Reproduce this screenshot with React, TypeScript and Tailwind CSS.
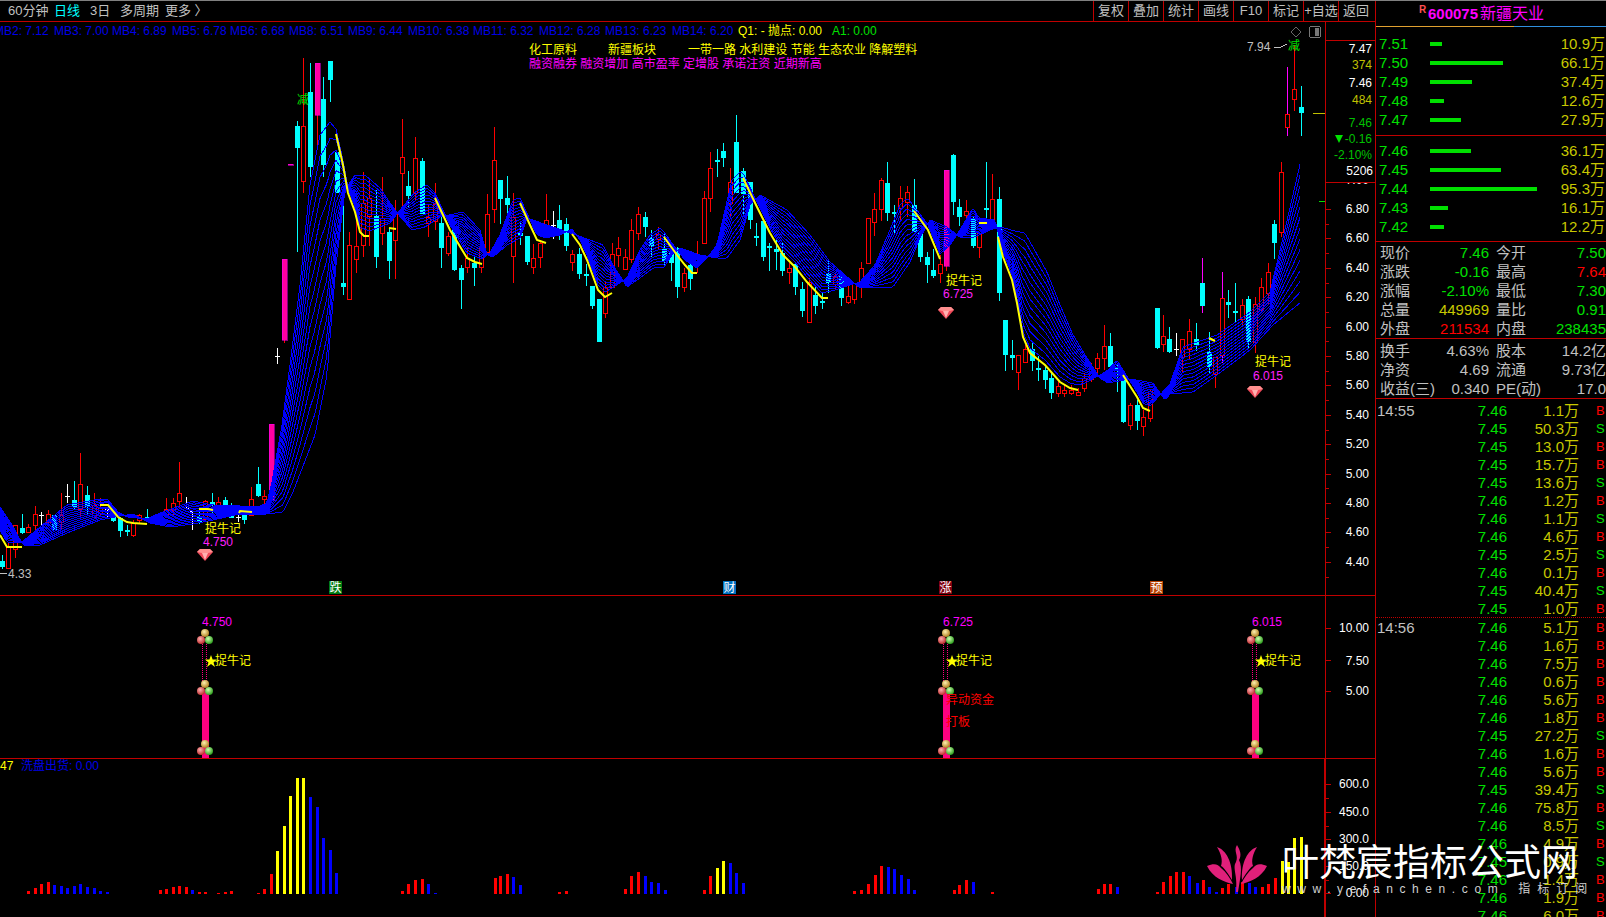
type Pt = [number, number];
type Candle = [number, number, number, number, number, string];

const RED_LINE = "#c00000";

// x, high, top, bottom, low, kind (r red, c cyan, w white, p magenta bar, M red+magenta wick, N cyan+magenta wick)
const candles: Candle[] = [
  [2, 555, 561, 567, 569, "c"], [8, 543, 546, 568, 568, "r"], [15, 525, 525, 549, 558, "r"], [22, 514, 528, 533, 534, "c"],
  [28, 524, 527, 532, 532, "r"], [35, 506, 514, 525, 533, "r"], [41, 512, 515, 515, 525, "w"], [48, 510, 514, 522, 522, "r"],
  [54, 515, 515, 530, 530, "c"], [61, 493, 515, 522, 530, "r"], [67, 484, 496, 497, 503, "w"], [74, 481, 500, 507, 510, "c"],
  [80, 453, 484, 509, 517, "r"], [87, 486, 495, 507, 515, "c"], [94, 493, 505, 517, 517, "r"], [100, 498, 507, 513, 517, "r"],
  [107, 508, 509, 510, 517, "w"], [113, 513, 514, 521, 522, "c"], [120, 517, 518, 531, 537, "c"], [127, 525, 530, 532, 536, "c"],
  [133, 520, 523, 535, 537, "r"], [139, 514, 515, 520, 524, "r"], [147, 509, 517, 519, 520, "c"], [153, 517, 518, 520, 521, "c"],
  [160, 512, 514, 522, 524, "r"], [166, 498, 509, 515, 518, "r"], [173, 498, 503, 510, 515, "r"], [179, 462, 493, 501, 508, "r"],
  [186, 497, 508, 509, 510, "w"], [192, 510, 511, 512, 530, "w"], [199, 510, 517, 522, 524, "c"], [205, 500, 501, 519, 522, "r"],
  [212, 493, 502, 505, 513, "c"], [218, 497, 502, 506, 513, "r"], [225, 497, 500, 507, 508, "c"], [231, 503, 507, 518, 518, "c"],
  [238, 510, 517, 518, 522, "w"], [244, 513, 514, 520, 524, "c"], [251, 487, 499, 515, 516, "r"], [258, 467, 484, 496, 497, "c"],
  [264, 490, 496, 499, 506, "r"], [271, 424, 424, 500, 500, "p"], [277, 348, 356, 357, 364, "w"], [284, 259, 259, 340, 343, "p"],
  [290, 164, 164, 165, 165, "p"], [297, 121, 126, 148, 252, "c"], [303, 58, 126, 181, 193, "r"], [310, 63, 92, 167, 177, "c"],
  [317, 63, 63, 115, 145, "p"], [323, 77, 99, 165, 177, "c"], [330, 61, 61, 80, 102, "c"], [337, 152, 152, 193, 193, "c"],
  [343, 193, 283, 287, 295, "c"], [349, 232, 245, 299, 299, "r"], [356, 213, 246, 259, 273, "r"], [363, 172, 203, 245, 257, "r"],
  [369, 180, 198, 216, 246, "r"], [376, 190, 216, 257, 268, "c"], [382, 177, 218, 233, 245, "r"], [389, 228, 232, 261, 279, "c"],
  [395, 200, 214, 240, 279, "r"], [402, 119, 157, 173, 207, "r"], [408, 171, 186, 196, 207, "c"], [415, 137, 158, 193, 200, "r"],
  [422, 158, 161, 214, 214, "c"], [428, 205, 217, 223, 237, "r"], [435, 183, 204, 221, 230, "r"], [441, 213, 223, 248, 268, "c"],
  [448, 232, 236, 253, 256, "r"], [454, 230, 230, 270, 271, "c"], [461, 265, 268, 280, 309, "c"], [467, 248, 258, 267, 273, "r"],
  [474, 256, 263, 268, 286, "c"], [481, 247, 247, 267, 273, "r"], [487, 194, 214, 252, 252, "r"], [494, 127, 160, 209, 223, "r"],
  [500, 180, 180, 199, 224, "c"], [507, 176, 198, 205, 220, "c"], [513, 193, 217, 256, 283, "r"], [520, 222, 233, 236, 245, "c"],
  [527, 236, 236, 262, 265, "c"], [533, 244, 258, 267, 274, "r"], [540, 240, 243, 257, 268, "r"], [546, 194, 220, 227, 235, "r"],
  [553, 211, 225, 226, 239, "w"], [559, 205, 220, 230, 240, "c"], [566, 218, 224, 246, 251, "c"], [572, 250, 254, 262, 271, "r"],
  [579, 248, 254, 274, 279, "c"], [586, 264, 274, 276, 286, "c"], [592, 286, 286, 306, 309, "c"], [599, 299, 299, 342, 342, "c"],
  [605, 282, 287, 313, 318, "r"], [612, 243, 254, 287, 287, "r"], [618, 237, 248, 255, 267, "r"], [625, 249, 257, 269, 269, "r"],
  [631, 219, 230, 259, 263, "r"], [638, 207, 214, 233, 240, "r"], [645, 212, 217, 227, 237, "c"], [651, 230, 238, 246, 257, "c"],
  [658, 227, 234, 239, 250, "r"], [664, 233, 249, 261, 266, "c"], [671, 250, 253, 263, 281, "c"], [677, 247, 248, 287, 298, "c"],
  [684, 268, 273, 287, 292, "r"], [690, 264, 265, 279, 290, "c"], [697, 241, 255, 265, 273, "r"], [704, 191, 198, 243, 243, "r"],
  [710, 152, 168, 198, 212, "r"], [717, 149, 160, 162, 177, "c"], [723, 143, 151, 158, 167, "c"], [730, 168, 182, 203, 218, "r"],
  [736, 115, 142, 193, 193, "c"], [743, 168, 171, 194, 214, "c"], [750, 182, 182, 220, 229, "c"], [756, 223, 236, 237, 246, "c"],
  [763, 221, 221, 257, 261, "c"], [769, 243, 246, 248, 271, "c"], [776, 239, 249, 252, 270, "c"], [782, 243, 253, 271, 276, "c"],
  [789, 263, 268, 272, 284, "r"], [795, 264, 264, 287, 295, "c"], [802, 282, 289, 311, 317, "c"], [809, 278, 282, 322, 322, "r"],
  [815, 285, 295, 306, 314, "c"], [822, 293, 301, 302, 309, "c"], [828, 259, 274, 283, 293, "c"], [835, 272, 276, 284, 290, "r"],
  [841, 274, 274, 298, 306, "c"], [848, 283, 296, 302, 304, "r"], [854, 283, 283, 299, 304, "r"], [861, 262, 268, 281, 298, "r"],
  [868, 218, 218, 263, 264, "r"], [874, 193, 209, 222, 236, "r"], [881, 178, 180, 209, 221, "r"], [887, 162, 183, 213, 221, "c"],
  [894, 205, 212, 213, 234, "c"], [900, 186, 198, 208, 221, "r"], [907, 186, 192, 202, 217, "r"], [914, 179, 205, 232, 232, "c"],
  [920, 231, 232, 257, 262, "c"], [927, 252, 257, 265, 283, "c"], [933, 249, 270, 276, 278, "c"], [940, 255, 264, 273, 283, "r"],
  [946, 170, 170, 266, 271, "p"], [953, 154, 155, 202, 215, "c"], [959, 199, 207, 217, 226, "c"], [966, 200, 211, 215, 227, "r"],
  [973, 217, 218, 246, 248, "c"], [979, 233, 233, 247, 258, "r"], [986, 162, 208, 209, 223, "c"], [992, 174, 199, 222, 223, "r"],
  [999, 187, 199, 293, 301, "c"], [1005, 320, 320, 355, 371, "c"], [1012, 340, 355, 358, 370, "c"], [1018, 355, 355, 372, 390, "r"],
  [1025, 345, 349, 362, 363, "r"], [1032, 343, 349, 361, 371, "c"], [1038, 356, 368, 370, 381, "c"], [1045, 367, 370, 380, 389, "c"],
  [1051, 373, 378, 393, 399, "c"], [1058, 380, 386, 393, 397, "r"], [1064, 385, 390, 393, 397, "r"], [1071, 385, 390, 393, 395, "r"],
  [1078, 388, 392, 395, 396, "r"], [1084, 373, 378, 388, 392, "r"], [1091, 363, 367, 379, 382, "r"], [1097, 353, 358, 368, 373, "r"],
  [1104, 325, 346, 358, 370, "r"], [1110, 333, 346, 367, 370, "c"], [1117, 363, 367, 368, 392, "c"], [1123, 373, 379, 422, 423, "c"],
  [1130, 403, 405, 425, 430, "r"], [1137, 400, 405, 421, 430, "c"], [1143, 410, 417, 426, 436, "r"], [1150, 390, 391, 418, 422, "r"],
  [1157, 308, 308, 348, 349, "c"], [1163, 315, 336, 344, 352, "r"], [1169, 327, 339, 352, 353, "c"], [1176, 333, 349, 350, 356, "w"],
  [1182, 339, 339, 357, 373, "r"], [1189, 319, 331, 349, 360, "r"], [1196, 323, 339, 345, 351, "c"], [1202, 258, 283, 306, 313, "N"],
  [1209, 332, 352, 367, 373, "c"], [1215, 357, 357, 374, 388, "r"], [1222, 272, 298, 355, 363, "M"], [1228, 290, 302, 305, 318, "c"],
  [1235, 283, 311, 312, 323, "c"], [1242, 299, 305, 319, 327, "r"], [1248, 296, 299, 342, 348, "c"], [1255, 297, 304, 342, 353, "r"],
  [1261, 278, 287, 309, 313, "r"], [1268, 263, 272, 293, 305, "r"], [1274, 220, 224, 243, 259, "c"], [1281, 162, 172, 232, 237, "r"],
  [1287, 67, 114, 127, 136, "M"], [1294, 45, 89, 99, 111, "r"], [1301, 86, 107, 113, 136, "c"],
];

const fast: Pt[] = [
  [0, 535], [7, 547], [22, 547], [40, 532], [67, 510], [100, 504], [108, 505], [118, 517], [127, 522], [147, 524], [160, 518], [193, 506],
  [213, 510], [240, 511], [260, 511], [267, 508], [272, 487], [282, 430], [290, 370], [300, 290], [310, 190], [320, 140], [330, 127],
  [336, 134], [343, 165], [348, 193], [355, 212], [360, 232], [369, 236], [380, 232], [390, 228], [400, 215], [415, 197], [427, 190],
  [435, 198], [450, 230], [467, 258], [482, 264], [490, 258], [500, 240], [513, 205], [520, 203], [530, 225], [537, 240], [546, 243],
  [560, 240], [572, 234], [580, 245], [587, 260], [598, 290], [605, 297], [612, 293], [627, 283], [640, 255], [650, 240], [660, 233],
  [664, 237], [677, 255], [685, 265], [697, 273], [707, 263], [717, 250], [725, 215], [732, 185], [740, 177], [743, 178], [757, 207],
  [770, 233], [783, 255], [795, 267], [807, 282], [822, 298], [835, 295], [850, 290], [860, 287], [875, 270], [890, 235], [900, 210],
  [907, 203], [914, 211], [928, 230], [940, 259], [950, 250], [960, 235], [973, 213], [979, 223], [995, 225], [998, 237], [1003, 257],
  [1012, 280], [1017, 303], [1023, 337], [1030, 353], [1045, 365], [1060, 382], [1070, 388], [1078, 390], [1085, 388], [1100, 380],
  [1108, 375], [1117, 365], [1123, 375], [1137, 397], [1143, 408], [1150, 411], [1160, 400], [1170, 389], [1183, 352], [1217, 340],
  [1250, 317], [1270, 297], [1283, 243], [1301, 165],
];

const slow: Pt[] = [
  [0, 502], [12, 520], [23, 540], [40, 540], [67, 528], [100, 515], [120, 511], [133, 509], [150, 518], [170, 522], [193, 519], [213, 515],
  [240, 509], [267, 509], [283, 507], [293, 487], [315, 430], [327, 370], [336, 260], [345, 185], [355, 170], [365, 170], [380, 183],
  [397, 208], [412, 225], [425, 222], [440, 212], [463, 207], [480, 225], [487, 250], [493, 252], [507, 240], [520, 233], [527, 213],
  [547, 220], [573, 229], [590, 235], [603, 240], [613, 260], [627, 282], [637, 275], [653, 263], [664, 262], [672, 250], [680, 243],
  [700, 250], [717, 253], [727, 253], [740, 235], [750, 200], [760, 190], [787, 205], [810, 230], [830, 257], [860, 283], [893, 282],
  [910, 257], [920, 233], [930, 215], [947, 222], [960, 232], [975, 232], [990, 225], [1000, 222], [1015, 226], [1025, 228], [1030, 237],
  [1047, 267], [1060, 300], [1073, 330], [1087, 353], [1100, 373], [1108, 378], [1130, 374], [1153, 378], [1165, 395], [1170, 389],
  [1193, 387], [1217, 370], [1250, 345], [1273, 320], [1301, 297],
];

const yellowRuns: Pt[][] = [
  [[0, 535], [7, 547], [22, 547]],
  [[100, 505], [108, 505], [118, 517], [127, 522], [133, 523], [147, 524]],
  [[199, 509], [208, 509], [213, 510]],
  [[239, 513], [240, 511], [252, 512]],
  [[336, 134], [343, 165], [348, 193], [355, 212], [360, 232], [364, 236], [369, 236]],
  [[389, 228], [396, 229]],
  [[435, 198], [450, 230], [467, 258], [475, 262], [482, 264]],
  [[520, 203], [530, 225], [537, 240], [546, 243]],
  [[572, 234], [580, 245], [587, 260], [598, 290], [605, 297], [612, 293]],
  [[664, 237], [677, 255], [685, 265], [692, 273], [697, 273]],
  [[743, 178], [757, 207], [770, 233], [783, 255], [795, 267], [807, 282], [822, 298], [828, 298]],
  [[914, 211], [928, 230], [940, 259]],
  [[979, 223], [987, 223]],
  [[998, 237], [1003, 257], [1012, 280], [1017, 303], [1023, 337], [1030, 353], [1045, 365], [1060, 382], [1070, 388], [1078, 390]],
  [[1123, 375], [1137, 397], [1143, 408], [1150, 411]],
  [[1209, 338], [1215, 341]],
];

// volume pane: x, height, colour
const R = "#ff0000";
const B = "#0000ff";
const Y = "#ffff00";
const volumes: [number, number, string][] = [
  [28, 3, R], [35, 6, R], [41, 10, R], [48, 12, R], [54, 9, B], [61, 8, B], [67, 6, B], [74, 8, B], [80, 10, B], [87, 7, B], [94, 6, B], [100, 3, B], [107, 2, B],
  [160, 4, R], [166, 5, R], [173, 7, R], [179, 8, R], [186, 7, R], [192, 4, B], [199, 2, R], [205, 2, R], [218, 1, R], [225, 2, R], [231, 3, R],
  [258, 1, R], [264, 5, R], [271, 20, R], [277, 43, Y], [284, 68, Y], [290, 98, Y], [297, 116, Y], [303, 116, Y],
  [310, 97, B], [317, 87, B], [323, 56, B], [330, 44, B], [336, 21, B],
  [402, 3, R], [408, 10, R], [415, 14, R], [422, 15, R], [428, 10, B], [435, 1, B],
  [495, 16, R], [500, 18, R], [507, 20, R], [513, 17, B], [520, 9, B], [559, 2, R], [566, 3, R],
  [625, 5, R], [631, 18, R], [638, 22, R], [645, 18, B], [651, 12, B], [658, 11, B], [665, 4, B],
  [704, 4, R], [710, 18, R], [717, 26, Y], [723, 33, Y], [730, 31, B], [736, 21, B], [743, 11, B],
  [854, 3, R], [861, 4, R], [868, 10, R], [875, 19, R], [881, 28, R], [888, 27, B], [894, 25, B], [901, 19, B], [908, 15, B], [914, 4, B],
  [954, 4, R], [959, 9, R], [966, 14, R], [973, 12, B], [992, 2, R],
  [1098, 5, R], [1104, 10, R], [1110, 10, R], [1117, 7, B],
  [1157, 2, R], [1163, 12, R], [1170, 18, R], [1176, 22, R], [1183, 22, R], [1189, 18, B], [1197, 11, B], [1203, 14, R], [1209, 7, B], [1216, 2, B],
  [1222, 6, R], [1228, 10, R], [1236, 7, B], [1242, 12, R], [1249, 11, B], [1255, 7, B], [1262, 7, R], [1268, 10, R], [1275, 16, R],
  [1282, 33, Y], [1288, 32, Y], [1294, 56, Y], [1301, 57, Y],
];

const lerpAt = (pts: Pt[], x: number) => {
  for (let i = 1; i < pts.length; i++) {
    if (x <= pts[i][0]) {
      const [x0, y0] = pts[i - 1];
      const [x1, y1] = pts[i];
      return y0 + ((y1 - y0) * (x - x0)) / (x1 - x0 || 1);
    }
  }
  return pts[pts.length - 1][1];
};

const ribbonPaths = Array.from({ length: 14 }, (_, k) => {
  const t = k / 13;
  let d = "";
  for (let x = 0; x <= 1301; x += 2) {
    const f = lerpAt(fast, x);
    const s = lerpAt(slow, x);
    const y = f + (s - f) * t + (t - 0.5) * 10;
    d += `${d ? "L" : "M"}${x} ${y.toFixed(1)}`;
  }
  return d;
});

const toPoints = (pts: Pt[]) => pts.map((p) => p.join(",")).join(" ");

const T = ({ x, y, c = "#fff", s = 12, a = "start", children }: { x: number; y: number; c?: string; s?: number; a?: "start" | "end" | "middle"; children: React.ReactNode }) => (
  <text x={x} y={y} fill={c} fontSize={s} textAnchor={a} dominantBaseline="central">
    {children}
  </text>
);

const CandleMark = ({ d }: { d: Candle }) => {
  const [x, hi, top, bot, lo, k] = d;
  const isCyan = k === "c" || k === "N";
  const wick = k === "M" || k === "N" ? "#ff00ff" : k === "w" ? "#fff" : k === "p" ? "#ff0000" : isCyan ? "#00ffff" : "#ff0000";
  return (
    <g>
      <line x1={x + 0.5} x2={x + 0.5} y1={hi} y2={lo} stroke={wick} />
      {k === "p" && <rect x={x - 2} y={top} width={5} height={bot - top} fill="#ff00a0" stroke="#ff00ff" strokeWidth={0.5} />}
      {isCyan && <rect x={x - 2} y={top} width={5} height={Math.max(bot - top, 2)} fill="#00ffff" />}
      {(k === "r" || k === "M") && <rect x={x - 1.5} y={top + 0.5} width={4} height={bot - top} fill="#000" stroke="#ff0000" />}
      {k === "w" && <line x1={x - 2} x2={x + 3} y1={top + 0.5} y2={top + 0.5} stroke="#fff" />}
    </g>
  );
};

const Gem = ({ x, y }: { x: number; y: number }) => (
  <g shapeRendering="auto">
    <polygon points={`${x - 8},${y - 3} ${x - 5},${y - 6} ${x + 5},${y - 6} ${x + 8},${y - 3} ${x},${y + 6}`} fill="#f04858" />
    <polygon points={`${x - 8},${y - 3} ${x - 5},${y - 6} ${x + 5},${y - 6} ${x + 8},${y - 3} ${x + 3},${y - 2} ${x - 3},${y - 2}`} fill="#ff9090" />
    <polygon points={`${x - 3},${y - 2} ${x + 3},${y - 2} ${x},${y + 5}`} fill="#ffb0b0" />
  </g>
);

const Balls = ({ x, y }: { x: number; y: number }) => (
  <g shapeRendering="auto">
    <circle cx={x} cy={y - 4} r={4} fill="url(#ballGold)" />
    <circle cx={x - 4} cy={y + 3} r={4} fill="url(#ballRed)" />
    <circle cx={x + 4} cy={y + 3} r={4} fill="url(#ballGreen)" />
  </g>
);

const Signal = ({ x, label, extra }: { x: number; label: string; extra?: boolean }) => (
  <g>
    <T x={x - 3} y={622} c="#ff00ff">{label}</T>
    <line x1={x - 2.5} x2={x - 2.5} y1={642} y2={684} stroke="#ff0080" strokeDasharray="1 1" />
    <line x1={x + 1.5} x2={x + 1.5} y1={642} y2={684} stroke="#ff0080" strokeDasharray="1 1" />
    <rect x={x - 3} y={692} width={7} height={66} fill="#ff0080" />
    <Balls x={x} y={637} />
    <Balls x={x} y={688} />
    <Balls x={x} y={748} />
    <polygon shapeRendering="auto" fill="#ffff00" points={`${x + 6},${655} ${x + 7.6},${659.5} ${x + 12},${659.5} ${x + 8.5},${662.5} ${x + 10},${667} ${x + 6},${664} ${x + 2},${667} ${x + 3.5},${662.5} ${x},${659.5} ${x + 4.4},${659.5}`} />
    <T x={x + 10} y={661} c="#ffff00">捉牛记</T>
    {extra && (
      <>
        <T x={x} y={700} c="#ff0000">异动资金</T>
        <T x={x} y={722} c="#ff0000">打板</T>
      </>
    )}
  </g>
);

const MainPane = () => {
  const priceY = (p: number) => 209 + (6.8 - p) * 147;
  const ticks = Array.from({ length: 26 }, (_, i) => 6.8 - i * 0.1);
  const labels = ["6.80", "6.60", "6.40", "6.20", "6.00", "5.80", "5.60", "5.40", "5.20", "5.00", "4.80", "4.60", "4.40"];
  const infos: [number, string][] = [
    [-6, "MB2: 7.12"], [54, "MB3: 7.00"], [112, "MB4: 6.89"], [172, "MB5: 6.78"], [230, "MB6: 6.68"], [289, "MB8: 6.51"], [348, "MB9: 6.44"],
    [408, "MB10: 6.38"], [473, "MB11: 6.32"], [539, "MB12: 6.28"], [605, "MB13: 6.23"], [672, "MB14: 6.20"],
  ];
  const badges: [number, string, string][] = [[329, "跌", "#007a10"], [723, "财", "#0070c0"], [939, "涨", "#800010"], [1150, "预", "#b84000"]];
  return (
    <svg width={1375} height={573} viewBox="0 22 1375 573" shapeRendering="crispEdges" className="block border-0">
      {candles.map((d) => <CandleMark key={d[0]} d={d} />)}
      {ribbonPaths.map((d, i) => <path key={i} d={d} fill="none" stroke="#0000ff" />)}
      {yellowRuns.map((r, i) => <polyline key={i} points={toPoints(r)} fill="none" stroke="#ffff00" strokeWidth={2} shapeRendering="auto" />)}

      {infos.map(([x, t]) => <T key={t} x={x} y={31} c="#0000e8">{t}</T>)}
      <T x={738} y={31} c="#ffff00">Q1: -</T>
      <T x={768} y={31} c="#ffff00">抛点: 0.00</T>
      <T x={832} y={31} c="#00e000">A1: 0.00</T>

      <T x={529} y={50} c="#ffff00">化工原料</T>
      <T x={608} y={50} c="#ffff00">新疆板块</T>
      <T x={688} y={50} c="#ffff00">一带一路 水利建设 节能 生态农业 降解塑料</T>
      <T x={529} y={64} c="#ff00ff">融资融券 融资增加 高市盈率 定增股 承诺注资 近期新高</T>

      <polygon points="1296,27 1301,32 1296,37 1291,32" fill="none" stroke="#666" shapeRendering="auto" />
      <rect x={1309.5} y={26.5} width={11} height={11} rx={2} fill="#000" stroke="#777" />
      <rect x={1315} y={28} width={4} height={8} fill="#777" />

      <T x={297} y={100} c="#00e000">减</T>
      <T x={1247} y={47} c="#c0c0c0">7.94</T>
      <polyline points="1274,47 1281,47 1287,44" fill="none" stroke="#c0c0c0" />
      <T x={1288} y={46} c="#00e000">减</T>
      <T x={8} y={574} c="#c0c0c0">4.33</T>
      <line x1={0} x2={7} y1={573} y2={573} stroke="#c0c0c0" />

      <T x={205} y={529} c="#ffff00">捉牛记</T>
      <T x={203} y={542} c="#ff20ff">4.750</T>
      <Gem x={205} y={555} />
      <T x={946} y={281} c="#ffff00">捉牛记</T>
      <T x={943} y={294} c="#ff20ff">6.725</T>
      <Gem x={946} y={313} />
      <T x={1255} y={362} c="#ffff00">捉牛记</T>
      <T x={1253} y={376} c="#ff20ff">6.015</T>
      <Gem x={1255} y={392} />

      {badges.map(([x, t, c]) => (
        <g key={t}>
          <rect x={x} y={581} width={13} height={13} fill={c} />
          <T x={x + 0.5} y={587.5} s={12}>{t}</T>
        </g>
      ))}

      <line x1={1313} x2={1325} y1={113.5} y2={113.5} stroke="#c0c000" />
      <line x1={1319} x2={1325} y1={201.5} y2={201.5} stroke="#00e000" />

      <line x1={1325.5} x2={1325.5} y1={22} y2={595} stroke={RED_LINE} />
      {ticks.map((p, i) => (
        <line key={i} x1={1326} x2={i % 2 ? 1329 : 1331} y1={Math.round(priceY(p)) + 0.5} y2={Math.round(priceY(p)) + 0.5} stroke={RED_LINE} />
      ))}
      {labels.map((l) => <T key={l} x={1369} y={priceY(Number(l))} a="end">{l}</T>)}

      <T x={1369} y={180} a="end">7.00</T>
      <rect x={1326} y={22} width={49} height={160} fill="#000" />
      <line x1={1325} x2={1375} y1={40.5} y2={40.5} stroke={RED_LINE} />
      <line x1={1325} x2={1375} y1={182.5} y2={182.5} stroke={RED_LINE} />
      <T x={1372} y={49} a="end">7.47</T>
      <T x={1372} y={65} a="end" c="#c0c000">374</T>
      <T x={1372} y={83} a="end">7.46</T>
      <T x={1372} y={100} a="end" c="#c0c000">484</T>
      <T x={1372} y={123} a="end" c="#00c000">7.46</T>
      <polygon points="1335,135 1343,135 1339,143" fill="#00e000" shapeRendering="auto" />
      <T x={1372} y={139} a="end" c="#00c000">-0.16</T>
      <T x={1372} y={155} a="end" c="#00c000">-2.10%</T>
      <T x={1373} y={171} a="end">5206</T>
    </svg>
  );
};

const SignalPane = () => (
  <svg width={1375} height={162} viewBox="0 596 1375 162" shapeRendering="crispEdges" className="block">
    <defs>
      <radialGradient id="ballGold" cx="40%" cy="35%" r="65%"><stop offset="0%" stopColor="#fff0b0" /><stop offset="100%" stopColor="#b08020" /></radialGradient>
      <radialGradient id="ballRed" cx="40%" cy="35%" r="65%"><stop offset="0%" stopColor="#ffb0b0" /><stop offset="100%" stopColor="#c03030" /></radialGradient>
      <radialGradient id="ballGreen" cx="40%" cy="35%" r="65%"><stop offset="0%" stopColor="#d0ffb0" /><stop offset="100%" stopColor="#30a020" /></radialGradient>
    </defs>
    <Signal x={205} label="4.750" />
    <Signal x={946} label="6.725" extra />
    <Signal x={1255} label="6.015" />
    <line x1={1325.5} x2={1325.5} y1={596} y2={758} stroke={RED_LINE} />
    {[628, 660, 691].map((y) => <line key={y} x1={1326} x2={1331} y1={y + 0.5} y2={y + 0.5} stroke={RED_LINE} />)}
    <T x={1369} y={628} a="end">10.00</T>
    <T x={1369} y={661} a="end">7.50</T>
    <T x={1369} y={691} a="end">5.00</T>
  </svg>
);

const VolumePane = () => (
  <svg width={1375} height={158} viewBox="0 759 1375 158" shapeRendering="crispEdges" className="block">
    <T x={0} y={766} c="#ffff00">47</T>
    <T x={21} y={766} c="#0000e8">洗盘出货: 0.00</T>
    {volumes.map(([x, h, c]) => <rect key={x} x={x - 1} y={894 - h} width={3} height={h} fill={c} />)}
    <line x1={1325} x2={1325} y1={759} y2={917} stroke={RED_LINE} strokeWidth={2} />
    {[784, 798, 812, 826, 839, 853, 866, 880, 893].map((y, i) => (
      <line key={y} x1={1326} x2={i % 2 ? 1329 : 1331} y1={y + 0.5} y2={y + 0.5} stroke={RED_LINE} />
    ))}
    <T x={1369} y={784} a="end">600.0</T>
    <T x={1369} y={812} a="end">450.0</T>
    <T x={1369} y={839} a="end">300.0</T>
    <T x={1369} y={866} a="end">150.0</T>
    <T x={1369} y={893} a="end">0.00</T>
  </svg>
);

const toolbarLeft = [
  { t: "60分钟", c: "text-[#c0c0c0]", w: "w-[46px]" },
  { t: "日线", c: "text-[#00ffff]", w: "w-[36px]" },
  { t: "3日", c: "text-[#c0c0c0]", w: "w-[30px]" },
  { t: "多周期", c: "text-[#c0c0c0]", w: "w-[45px]" },
  { t: "更多 〉", c: "text-[#c0c0c0]", w: "w-[40px]" },
];
const toolbarRight = ["复权", "叠加", "统计", "画线", "F10", "标记", "+自选", "返回"];

const sells: [string, number, string][] = [["7.51", 12, "10.9"], ["7.50", 73, "66.1"], ["7.49", 42, "37.4"], ["7.48", 14, "12.6"], ["7.47", 31, "27.9"]];
const buys: [string, number, string][] = [["7.46", 41, "36.1"], ["7.45", 71, "63.4"], ["7.44", 107, "95.3"], ["7.43", 18, "16.1"], ["7.42", 14, "12.2"]];

const GREEN = "text-[#00e000]";
const GOLD = "text-[#c8c800]";
const GRAY = "text-[#c0c0c0]";
const stats: [string, string, string, string, string, string][] = [
  ["现价", "7.46", GREEN, "今开", "7.50", GREEN],
  ["涨跌", "-0.16", GREEN, "最高", "7.64", "text-[#ff0000]"],
  ["涨幅", "-2.10%", GREEN, "最低", "7.30", GREEN],
  ["总量", "449969", GOLD, "量比", "0.91", GREEN],
  ["外盘", "211534", "text-[#ff0000]", "内盘", "238435", GREEN],
];
const fundamentals: [string, string, string, string][] = [
  ["换手", "4.63%", "股本", "14.2亿"],
  ["净资", "4.69", "流通", "9.73亿"],
  ["收益(三)", "0.340", "PE(动)", "17.0"],
];

const ticks1: [string, string, string][] = [
  ["7.46", "1.1", "B"], ["7.45", "50.3", "S"], ["7.45", "13.0", "B"], ["7.45", "15.7", "B"], ["7.45", "13.6", "S"], ["7.46", "1.2", "B"],
  ["7.46", "1.1", "S"], ["7.46", "4.6", "B"], ["7.45", "2.5", "S"], ["7.46", "0.1", "B"], ["7.45", "40.4", "S"], ["7.45", "1.0", "B"],
];
const ticks2: [string, string, string][] = [
  ["7.46", "5.1", "B"], ["7.46", "1.6", "B"], ["7.46", "7.5", "B"], ["7.46", "0.6", "B"], ["7.46", "5.6", "B"], ["7.46", "1.8", "B"],
  ["7.45", "27.2", "S"], ["7.46", "1.6", "B"], ["7.46", "5.6", "B"], ["7.45", "39.4", "S"], ["7.46", "75.8", "B"], ["7.46", "8.5", "S"],
  ["7.46", "4.9", "B"], ["7.45", "0.9", "S"], ["7.46", "1.4", "B"], ["7.46", "1.9", "B"], ["7.46", "6.0", "B"],
];

const QuoteRow = ({ row }: { row: [string, number, string] }) => (
  <div className="flex h-[19px] items-center">
    <span className={`w-[54px] pl-[3px] ${GREEN}`}>{row[0]}</span>
    <div className="flex-1">
      <div className="h-[4px] bg-[#00e000]" style={{ width: row[1] }} />
    </div>
    <span className={`pr-[1px] ${GOLD}`}>{row[2]}万</span>
  </div>
);

const TickRow = ({ time, row }: { time?: string; row: [string, string, string] }) => (
  <div className="flex h-[18px] items-center">
    <span className={`w-[90px] pl-[1px] ${GRAY}`}>{time}</span>
    <span className={`w-[41px] text-right ${GREEN}`}>{row[0]}</span>
    <span className={`w-[72px] text-right ${GOLD}`}>{row[1]}万</span>
    <span className={`ml-[17px] text-[13px] ${row[2] === "B" ? "text-[#ff0000]" : GREEN}`}>{row[2]}</span>
  </div>
);

const RightPanel = () => (
  <div className="h-full w-[231px] border-l border-[#c00000] text-[15px] leading-none">
    <div className="flex h-[25px] items-center pl-[43px]">
      <span className="mb-[8px] w-[8px] text-[10px] font-bold text-[#ff5050]">R</span>
      <span className="ml-[1px] w-[52px] text-[15px] font-bold text-[#ff00ff]">600075</span>
      <span className="text-[16px] text-[#ff00ff]">新疆天业</span>
    </div>
    <div className="flex h-[1px]">
      <div className="w-[138px] bg-[#e0a030]" />
      <div className="flex-1 bg-[#3090e0]" />
    </div>
    <div className="border-b border-[#c00000] pt-[7px] pb-[6px]">
      {sells.map((r) => <QuoteRow key={r[0]} row={r} />)}
    </div>
    <div className="border-b border-[#c00000] pt-[5px] pb-[5px]">
      {buys.map((r) => <QuoteRow key={r[0]} row={r} />)}
    </div>
    <div className="border-b border-[#c00000] pt-[1px]">
      {stats.map((r) => (
        <div key={r[0]} className="grid h-[19px] grid-cols-[113px_117px] items-center">
          <div className="flex justify-between pl-[4px]">
            <span className={GRAY}>{r[0]}</span>
            <span className={r[2]}>{r[1]}</span>
          </div>
          <div className="flex justify-between pl-[7px]">
            <span className={GRAY}>{r[3]}</span>
            <span className={r[5]}>{r[4]}</span>
          </div>
        </div>
      ))}
    </div>
    <div className="border-b border-[#c00000] pt-[2px]">
      {fundamentals.map((r) => (
        <div key={r[0]} className={`grid h-[19px] grid-cols-[113px_117px] items-center ${GRAY}`}>
          <div className="flex justify-between pl-[4px]">
            <span>{r[0]}</span>
            <span>{r[1]}</span>
          </div>
          <div className="flex justify-between pl-[7px]">
            <span>{r[2]}</span>
            <span>{r[3]}</span>
          </div>
        </div>
      ))}
    </div>
    <div className="box-content border-b border-dotted border-[#c00000] pt-[2px]">
      {ticks1.map((r, i) => <TickRow key={i} time={i === 0 ? "14:55" : undefined} row={r} />)}
    </div>
    <div>
      {ticks2.map((r, i) => <TickRow key={i} time={i === 0 ? "14:56" : undefined} row={r} />)}
    </div>
  </div>
);

const Watermark = () => (
  <div className="absolute top-[845px] left-[1207px] flex items-start gap-[13px] text-white">
    <svg width={62} height={49} viewBox="1207 845 62 49" className="block">
      <g fill="#e0207a">
        <path d="M1217 847C1226 850 1233 862 1232 880C1226 870 1222 866 1221 866C1223 860 1221 854 1217 847Z" />
        <path d="M1207 866C1214 863 1218 864 1221 868C1226 872 1230 878 1233 884C1224 882 1213 878 1207 866Z" />
        <path d="M1257 847C1248 850 1241 862 1242 880C1248 870 1252 866 1253 866C1251 860 1253 854 1257 847Z" />
        <path d="M1267 866C1260 863 1256 864 1253 868C1248 872 1244 878 1241 884C1250 882 1261 878 1267 866Z" />
        <path d="M1237 845C1233 851 1239 855 1236 862C1232 868 1238 875 1236 892L1238 892C1240 878 1243 868 1239 860C1242 855 1240 850 1237 845Z" />
      </g>
    </svg>
    <div>
      <div className="text-[37px] leading-[37px] whitespace-nowrap">叶梵宸指标公式网</div>
      <div className="flex items-center text-[12px] leading-[14px] text-[#d0d0d0]">
        <span className="tracking-[6.6px]">www.yefanchen.com</span>
        <span className="ml-[14px] tracking-[7px]">指标订阅</span>
      </div>
    </div>
  </div>
);

export default function App() {
  return (
    <div className="relative h-[917px] w-[1606px] overflow-hidden bg-black font-['Liberation_Sans','Noto_Sans_CJK_SC',sans-serif]">
      <div className="h-[1px] bg-[#808080]" />
      <div className="flex h-[916px]">
        <div className="w-[1375px]">
          <div className="flex h-[21px] items-center justify-between border-b border-[#c00000] text-[13px]">
            <div className="flex items-center pl-[8px]">
              {toolbarLeft.map((i) => <span key={i.t} className={`${i.w} ${i.c} whitespace-nowrap`}>{i.t}</span>)}
            </div>
            <div className="flex h-full">
              {toolbarRight.map((t) => (
                <span key={t} className="flex w-[35px] items-center justify-center border-l border-[#c00000] text-[#c0c0c0]">{t}</span>
              ))}
              <span className="w-[2px]" />
            </div>
          </div>
          <div className="border-b border-[#c00000]"><MainPane /></div>
          <div className="border-b border-[#c00000]"><SignalPane /></div>
          <VolumePane />
        </div>
        <RightPanel />
      </div>
      <Watermark />
    </div>
  );
}
